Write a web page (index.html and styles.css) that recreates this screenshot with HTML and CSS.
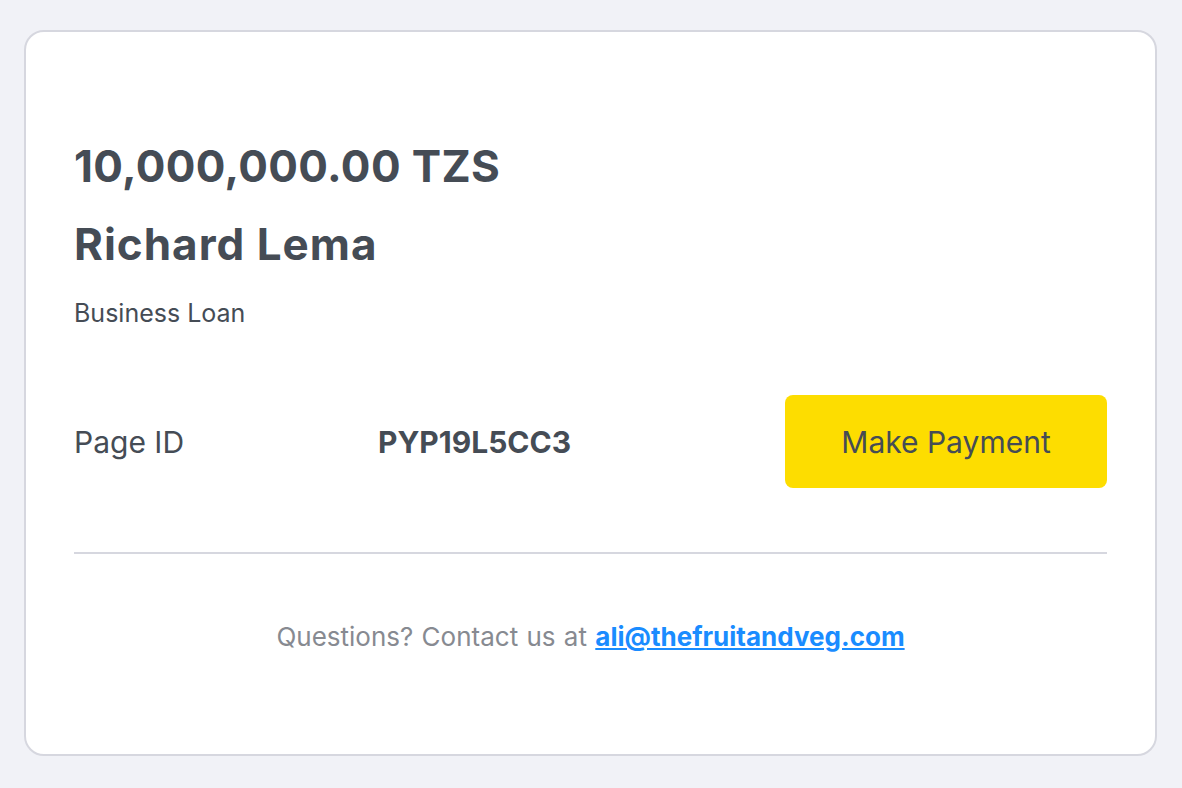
FILE: index.html
```html
<!DOCTYPE html>
<html lang="en">
<head>
  <meta charset="UTF-8" />
  <meta name="viewport" content="width=device-width, initial-scale=1.0"/>
  <title>Payment Page</title>
  <link rel="stylesheet" href="styles.css">
</head>
<body>

<div class="payment-card">
  <div class="amount">10,000,000.00 TZS</div>
  <div class="payer-name">Richard Lema</div>
  <div class="description">Business Loan</div>

  <div class="page-row">
    <div class="page-label">Page ID</div>
    <div class="page-id">PYP19L5CC3</div>
    <button type="button" class="pay-button">Make Payment</button>
  </div>

  <div class="contact">
    Questions? Contact us at <a href="#" class="contact-link">ali@thefruitandveg.com</a>
  </div>
</div>

</body>
</html>
```

FILE: styles.css
```css
* {
  margin: 0; padding: 0; box-sizing: border-box;
}

body {
  font-family: Inter, 'Noto Sans', sans-serif;
  background: #f1f2f7;
  color: #454c55;
  padding: 30px 25px 32px 24px;
}

.payment-card {
  background: white;
  border: 2px solid #d6d7df;
  border-radius: 20px;
  padding: 106px 48px 90px 48px;
  height: 726px;
}

.amount {
  font-size: 44px;
  font-weight: 700;
  line-height: 56px;
  letter-spacing: 0.35px;
}

.payer-name {
  font-size: 44px;
  font-weight: 700;
  line-height: 56px;
  margin-top: 22px;
  letter-spacing: 1px;
}

.description {
  font-size: 25px;
  line-height: 32px;
  margin-top: 25px;
}

.page-row {
  display: flex;
  align-items: center;
  margin-top: 66px;
  padding-bottom: 64px;
  border-bottom: 2px solid #d6d7df;
}

.page-label {
  font-size: 30px;
  width: 304px;
}

.page-id {
  font-size: 30px;
  font-weight: 700;
  flex: 1;
}

.pay-button {
  width: 322px;
  height: 93px;
  background: #fddd00;
  color: #454c55;
  border: none;
  border-radius: 8px;
  font-family: inherit;
  font-size: 30px;
  cursor: pointer;
}

.contact {
  text-align: center;
  font-size: 26px;
  line-height: 36px;
  color: #878a91;
  margin-top: 65px;
  word-spacing: 1px;
}

.contact-link {
  color: #1a8cff;
  font-weight: 700;
}
```
